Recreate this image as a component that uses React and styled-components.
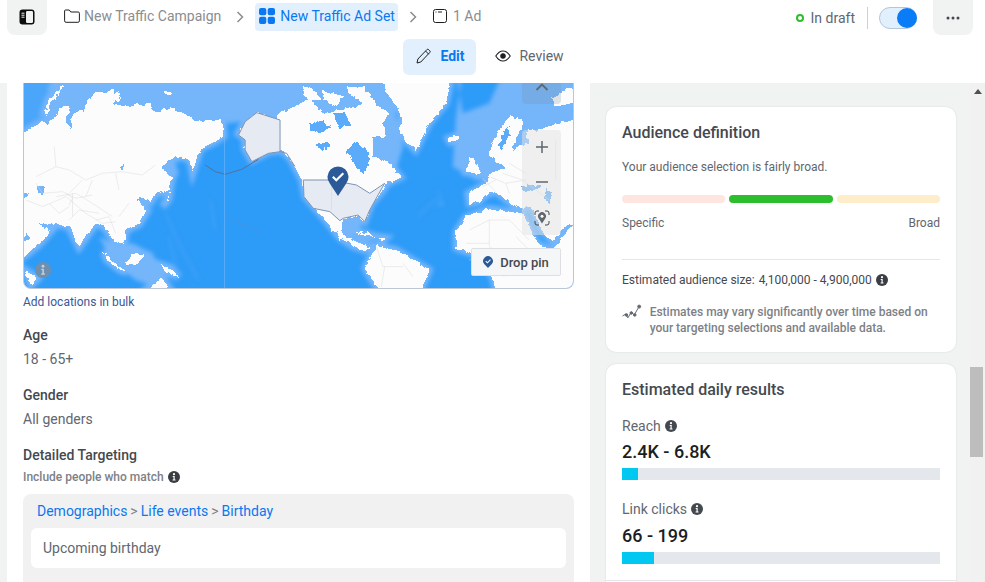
import React from 'react';
import styled, { createGlobalStyle } from 'styled-components';

const GlobalStyle = createGlobalStyle`
  html, body {
    margin: 0;
    padding: 0;
    height: 100%;
    overflow: hidden;
  }
  body {
    font-family: Roboto, "Liberation Sans", sans-serif;
    color: #444950;
  }
`;

// map outlines, traced at 3x: west half and east half of the picture
const WEST_LAND = [
  'M-30 160L25 155L80 125L95 132L120 105L130 85L160 78L150 125L170 150L165 110L190 90L200 100L210 68L240 40L290 30L320 58L288 68L340 78L405 72L412 98L470 82L545 125L620 118L625 168L592 188L555 205L532 275L525 240L500 230L462 240L440 262L470 292L462 330L420 342L405 365L385 352L362 358L395 392L370 432L330 450L325 492L295 482L265 440L240 430L190 500L160 440L110 430L62 432L105 452L72 490L30 525L-30 560z',
  'M85 100L100 55L145 15L130 40L105 70L95 105z',
  'M445 30l25 5l-5 12l-20 -5z',
  'M290 42l20 -8l-5 18z',
  'M330 550l30 -30l30 5l-25 30z',
  'M435 555l30 10l25 25l-40 -15z',
  'M380 640l60 -47l30 47z',
  'M265 515l40 40l30 20l-20 -5l-40 -30z',
  'M440 380l18 -20l6 -30l-8 32z',
  'M25 570l40 25l-20 20z',
  'M690 125l35 -27l70 22h80v170l-35 -35l-25 -40l-20 -5l-35 5l-50 25l-20 -35v-30l-20 -15z',
];

const EAST_LAND = [
  'M-40 105L60 55L100 100L150 88L200 80L240 60L302 100L280 130L292 172L250 170L250 232L292 240L335 292L292 312L280 332L245 372L225 425L205 405L160 415L155 450L175 475L215 490L240 500L225 512L190 500L150 475L110 425L75 385L45 350L35 300L0 235L-40 200z',
  'M40 20l30 5l20 28l-30 12l-20 -20z',
  'M100 30l60 20l-20 30l-40 -20z',
  'M170 20h50l40 50l-30 10l-50 -40z',
  'M40 160l20 -5l10 20l-25 5z',
  'M70 200l30 -15l10 15l-30 10z',
  'M275 0h210l-15 70l-50 60l-42 82l-25 -25l-22 -40l5 -45l-40 -60z',
  'M475 175l35 -12l-3 18l-26 6z',
  'M528 278l20 -48l28 50l-25 2z',
  'M790 55l50 -30l30 -5v50l-50 5l-20 5z',
  'M880 115L800 130L745 150L720 150L708 165L722 192L690 195L668 218L680 175L700 150L700 118L660 110L625 160L598 222L615 240L645 262L600 285L590 310L545 335L535 340L540 372L570 365L590 345L620 335L650 360L690 385L725 380L760 455L790 485L830 440L880 425z',
  'M500 455L530 410L600 385L700 400L745 490L790 510L860 425H880V640H620L610 590L560 525L500 505z',
  'M225 565L260 495L320 510L420 570L392 640H270z',
  'M190 452l50 10l15 12l-45 -10z',
  'M268 470l22 3l-10 8z',
];

const EAST_WATER = [
  'M165 215L190 190L228 200L240 240L222 285L195 250z',
  'M75 195l28 -10l20 10l-25 14z',
  'M60 130l40 -8l20 20l-30 18l-28 -8z',
  'M130 100l30 -5l25 40l-35 10z',
  'M695 318l60 -6l-20 22h-30z',
  'M772 325l14 15l-5 30l-14 -15z',
  'M640 165l22 -30l-4 30l-20 45l-12 -10z',
];

function InfoIcon({ color = '#3a3d42', glyph = '#fff', size = 12 }) {
  return (
    <svg width={size} height={size} viewBox="0 0 12 12">
      <circle cx="6" cy="6" r="6" fill={color} />
      <circle cx="6" cy="3.2" r="1.1" fill={glyph} />
      <path d="M4.7 5h2v3.6h.8v1H4.6v-1h.9V6h-.8z" fill={glyph} />
    </svg>
  );
}

function Chevron() {
  return (
    <svg width="8" height="12" viewBox="0 0 8 12" fill="none" stroke="#8a8d91" strokeWidth="1.5">
      <path d="M1.500 1l5 5-5 5" />
    </svg>
  );
}

function WorldMap() {
  return (
    <MapSvg viewBox="0 0 551 205" preserveAspectRatio="none">
      <defs>
        <filter id="shelf" filterUnits="userSpaceOnUse" x="-20" y="-20" width="591" height="245">
          <feGaussianBlur stdDeviation="2" />
        </filter>
        <filter id="coast" filterUnits="userSpaceOnUse" x="-20" y="-20" width="591" height="245">
          <feTurbulence type="fractalNoise" baseFrequency="0.16" numOctaves="3" seed="4" />
          <feDisplacementMap in="SourceGraphic" scale="6" xChannelSelector="R" yChannelSelector="G" />
        </filter>
      </defs>
      <rect width="551" height="205" fill="#2d9bf8" />

      {/* arctic water and continental shelf */}
      <g filter="url(#shelf)">
        <g transform="translate(-8,-3) scale(0.3333)">
          <path d="M100 -20H900V95L640 130L400 90L150 110L90 120z" fill="#74b6fb" />
          <path d="M-30 -20H110L70 130L-30 150z" fill="#4ba6f9" />
          {WEST_LAND.map((d) => <path key={d} d={d} fill="#74b6fb" stroke="#74b6fb" strokeWidth="24" />)}
          <path d="M440 250l30 -30l20 60l-30 50zM250 470l60 30l40 -10l60 30l40 70l-30 30l-60 -20l-50 -40l-40 -50z" fill="#74b6fb" />
          <path d="M450 400l40 90l60 110M585 360l15 90M460 470l30 130" fill="none" stroke="#4ba6f9" strokeWidth="4" />
        </g>
        <g transform="translate(267,-3) scale(0.3333)">
          <path d="M-30 -20H300L320 110L340 200L310 300L200 300L100 250z" fill="#74b6fb" />
          <path d="M480 -20H520L500 110L490 260L560 300L860 300V-20H640L600 70L520 100L500 -20z" fill="#74b6fb" />
          {EAST_LAND.map((d) => <path key={d} d={d} fill="#74b6fb" stroke="#74b6fb" strokeWidth="20" />)}
          <path d="M160 420l60 -10l-10 50l-40 20zM190 470l40 10l60 30l-30 10l-60 -20z" fill="#74b6fb" />
          <path d="M385 410l50 -50l25 15l-15 -45M440 380l25 -10" fill="none" stroke="#4ba6f9" strokeWidth="4" />
        </g>
      </g>

      {/* land with a rough coast */}
      <g filter="url(#coast)" shapeRendering="crispEdges">
        <g transform="translate(-8,-3) scale(0.3333)">
          {WEST_LAND.map((d) => <path key={d} d={d} fill="#fcfcfc" />)}
          <path d="M62 315l25 5l-5 25l-20 -5zM310 260l18 -10l-12 25zM-30 335l66 5l-12 12zM28 455l15 20l-18 5z" fill="#74b6fb" />
        </g>
        <g transform="translate(267,-3) scale(0.3333)">
          {EAST_LAND.map((d) => <path key={d} d={d} fill="#fcfcfc" />)}
          {EAST_WATER.map((d) => <path key={d} d={d} fill="#5aabf9" />)}
        </g>
      </g>

      {/* borders and the selected country */}
      <g transform="translate(-8,-3) scale(0.3333)" fill="none">
        <path d="M60 290l60 -30l40 10l50 30l50 -20l60 -5l60 10l40 -30M120 350l60 -10l50 30l60 40M30 360l50 20l70 -30l60 50l50 30l40 -5M170 340v70M230 300l-20 50M300 280l10 50M115 200l5 60M60 310l20 30l60 -5l40 20l50 -10M150 340l20 15l-10 20M160 420l30 -30l60 10M100 370l30 30l30 -20M240 420l40 -10l20 50M340 370l-30 40M200 300l-40 40" stroke="#d9dadc" strokeWidth="1.500" />
        <path d="M690 125l35 -27l70 22v95l-35 5l-50 25l-20 -35v-30l-20 -15z" fill="#e6ebf3" stroke="#7d93b5" strokeWidth="3" />
        <path d="M795 215l20 5l25 40" stroke="#7d93b5" strokeWidth="3" />
        <path d="M570 255l30 20l30 8l50 -15l50 -30" stroke="#566f9a" strokeWidth="3" />
        <path d="M628 125v500" stroke="#74b6fb" strokeWidth="2" />
        <path d="M630 410l100 45" stroke="#5b8fd0" strokeWidth="3" strokeDasharray="5 6" />
      </g>
      <g transform="translate(267,-3) scale(0.3333)" fill="none">
        <path d="M540 450l60 -30l60 0l60 60M600 420v80l50 30v60M530 490h70M620 335l-40 -40M640 280l60 20M260 500l20 60l60 0M285 560l-10 60M800 180v120M700 300l80 60M600 290l50 20l60 -10M660 250l50 30M540 540l60 -10M680 470l60 60M640 590l60 -50M580 320l40 -20M650 310l10 30M720 530l50 30M340 550l30 40" stroke="#d9dadc" strokeWidth="1.500" />
        <path d="M40 300L120 300L200 315L240 340L285 310L265 345L240 390L225 425L205 405L160 415L150 422L120 395L70 385L42 350z" fill="#e6ebf3" stroke="#7d93b5" strokeWidth="3" />
        <path d="M125 300v90" stroke="#d3d8e0" strokeWidth="2" />
      </g>
    </MapSvg>
  );
}

function App() {
  return (
    <>
      <GlobalStyle />
      <Page>
        <Header>
          <TopRow>
            <Crumbs>
              <SquareButton>
                <svg width="16" height="16" viewBox="0 0 16 16">
                  <rect x=".5" y=".5" width="15" height="15" rx="3" fill="#0d0d0d" />
                  <rect x="7" y="2" width="7" height="12" rx="1.200" fill="#f1f2f2" />
                  <path d="M2.500 4.200h3M2.500 6.200h3M2.500 8.200h3" stroke="#f1f2f2" strokeWidth="1" />
                </svg>
              </SquareButton>
              <Crumb>
                <svg width="16" height="14" viewBox="0 0 16 14" fill="none" stroke="#1c1e21" strokeWidth="1">
                  <path d="M.6 3V2a1 1 0 0 1 1-1h3.600l1.600 2h7.400a1.200 1.200 0 0 1 1.200 1.200v7.600a1.500 1.500 0 0 1-1.500 1.500H2.100a1.500 1.500 0 0 1-1.500-1.500z" />
                </svg>
                New Traffic Campaign
              </Crumb>
              <ChevronBox $left="15px" $right="11px"><Chevron /></ChevronBox>
              <Crumb $active>
                <svg width="16" height="16" viewBox="0 0 16 16" fill="#0a78f0">
                  <rect width="7.300" height="7.300" rx="2" />
                  <rect x="8.700" width="7.300" height="7.300" rx="2" />
                  <rect y="8.700" width="7.300" height="7.300" rx="2" />
                  <rect x="8.700" y="8.700" width="7.300" height="7.300" rx="2" />
                </svg>
                New Traffic Ad Set
              </Crumb>
              <ChevronBox $left="11px" $right="16px"><Chevron /></ChevronBox>
              <Crumb $wide>
                <svg width="14" height="14" viewBox="0 0 14 14" fill="none" stroke="#1c1e21" strokeWidth="1">
                  <rect x=".5" y=".5" width="13" height="13" rx="2" />
                  <path d="M2.500 3h1M5 3h4" />
                </svg>
                1 Ad
              </Crumb>
            </Crumbs>
            <Status>
              <Dot />
              <StatusLabel>In draft</StatusLabel>
              <Separator />
              <Toggle><Knob /></Toggle>
              <SquareButton $more>
                <svg width="14" height="4" viewBox="0 0 14 4" fill="#444950">
                  <circle cx="2" cy="2" r="1.500" />
                  <circle cx="7" cy="2" r="1.500" />
                  <circle cx="12" cy="2" r="1.500" />
                </svg>
              </SquareButton>
            </Status>
          </TopRow>
          <Tabs>
            <Tab $active>
              <svg width="15" height="16" viewBox="0 0 15 16" fill="none" stroke="#1c1e21" strokeWidth="1">
                <path d="M1 15l.9-4L10.800 1.700a1.300 1.300 0 0 1 1.900 0l1 1a1.300 1.300 0 0 1 0 1.900L4.800 14z" />
                <path d="M9.500 3l3.200 3.200" />
              </svg>
              Edit
            </Tab>
            <Tab>
              <svg width="16" height="12" viewBox="0 0 16 12" fill="none" stroke="#1c1e21" strokeWidth="1.100">
                <path d="M.8 6C3 2.500 5.300 1 8 1s5 1.500 7.200 5C13 9.500 10.700 11 8 11S3 9.500.8 6z" />
                <circle cx="8" cy="6" r="2.200" fill="#1c1e21" />
              </svg>
              Review
            </Tab>
          </Tabs>
        </Header>

        <Content>
          <LeftPanel>
            <MapBox>
              <WorldMap />
              <MapControls>
                <MapTopControl>
                  <svg width="14" height="8" viewBox="0 0 14 8" fill="none" stroke="#606770" strokeWidth="1.800">
                    <path d="M1.500 7L7 1.500 12.500 7" />
                  </svg>
                </MapTopControl>
                <MapZoomControl>
                  <svg width="12" height="12" viewBox="0 0 12 12" stroke="#606770" strokeWidth="1.500">
                    <path d="M6 0v12M0 6h12" />
                  </svg>
                  <svg width="12" height="2" viewBox="0 0 12 2" stroke="#606770" strokeWidth="1.500">
                    <path d="M0 1h12" />
                  </svg>
                  <svg width="16" height="16" viewBox="0 0 16 16" fill="none">
                    <path d="M1 5V3a2 2 0 0 1 2-2h2M11 1h2a2 2 0 0 1 2 2v2M15 11v2a2 2 0 0 1-2 2h-2M5 15H3a2 2 0 0 1-2-2v-2" stroke="#444950" strokeWidth="1" />
                    <path d="M8 13.500L4.600 8.300a4 4 0 1 1 6.800 0z" fill="#606770" />
                    <circle cx="8" cy="6.200" r="1.500" fill="#fff" />
                  </svg>
                </MapZoomControl>
              </MapControls>
              <MapPin>
                <svg width="22" height="30" viewBox="0 0 22 30">
                  <path d="M11 30L2.800 17.500A10.500 10.500 0 1 1 19.200 17.500z" fill="#2c5a98" />
                  <path d="M5.800 10.800l3.500 3.400 7-7" fill="none" stroke="#fff" strokeWidth="2.200" />
                </svg>
              </MapPin>
              <MapInfo><InfoIcon color="#6f8fae" glyph="#c3d0dc" size={16} /></MapInfo>
              <DropPin>
                <svg width="10" height="12" viewBox="0 0 11 13">
                  <path d="M5.500 13L1.300 8.800A5.300 5.300 0 1 1 9.700 8.800z" fill="#2c5a98" />
                  <path d="M3 5.500l1.900 1.900L8.200 4" fill="none" stroke="#fff" strokeWidth="1.200" />
                </svg>
                Drop pin
              </DropPin>
            </MapBox>
            <BulkLink>Add locations in bulk</BulkLink>
            <FieldLabel $first>Age</FieldLabel>
            <FieldValue>18 - 65+</FieldValue>
            <FieldLabel>Gender</FieldLabel>
            <FieldValue>All genders</FieldValue>
            <FieldLabel>Detailed Targeting</FieldLabel>
            <IncludeRow>Include people who match <InfoIcon /></IncludeRow>
            <TargetBox>
              <TargetPath>
                <TargetLink>Demographics</TargetLink>
                <TargetSep>&gt;</TargetSep>
                <TargetLink>Life events</TargetLink>
                <TargetSep>&gt;</TargetSep>
                <TargetLink>Birthday</TargetLink>
              </TargetPath>
              <TargetItem>Upcoming birthday</TargetItem>
            </TargetBox>
          </LeftPanel>

          <RightPanel>
            <AudienceCard>
              <CardTitle>Audience definition</CardTitle>
              <SmallText>Your audience selection is fairly broad.</SmallText>
              <Meter>
                <MeterPart $color="#ffe5e0" />
                <MeterPart $color="#2dbe2d" />
                <MeterPart $color="#fdeec9" />
              </Meter>
              <MeterLabels>
                <span>Specific</span>
                <span>Broad</span>
              </MeterLabels>
              <CardRule />
              <SizeRow>
                <span>Estimated audience size:</span>
                <span>4,100,000 - 4,900,000</span>
                <InfoIcon />
              </SizeRow>
              <NoteRow>
                <svg width="20" height="16" viewBox="0 0 20 16" fill="none" stroke="#606770" strokeWidth="1">
                  <path d="M.5 12l3.500-2 2 4 3.500-6 3 3 4-7" />
                  <circle cx="4.500" cy="11" r="1.300" fill="#606770" />
                  <circle cx="9.500" cy="9" r="1.300" fill="#606770" />
                  <circle cx="13" cy="11" r="1.300" fill="#606770" />
                  <circle cx="17.500" cy="2.500" r="1.500" fill="#606770" />
                </svg>
                <NoteText>Estimates may vary significantly over time based on your targeting selections and available data.</NoteText>
              </NoteRow>
            </AudienceCard>

            <ResultsCard>
              <CardTitle>Estimated daily results</CardTitle>
              <ResultLabel>Reach <InfoIcon color="#444950" /></ResultLabel>
              <ResultValue>2.4K - 6.8K</ResultValue>
              <Bar><BarFill style={{ width: '5%' }} /></Bar>
              <ResultLabel $second>Link clicks <InfoIcon color="#444950" /></ResultLabel>
              <ResultValue $second>66 - 199</ResultValue>
              <Bar><BarFill style={{ width: '10%' }} /></Bar>
              <ResultsRule />
            </ResultsCard>
          </RightPanel>

          <Scrollbar>
            <ScrollArrow />
            <ScrollThumb />
          </Scrollbar>
        </Content>
      </Page>
    </>
  );
}

export default App;

const Page = styled.div`
  width: 985px;
  height: 582px;
  overflow: hidden;
  display: flex;
  flex-direction: column;
  background: #f1f2f2;
`;

const Header = styled.header`
  height: 83px;
  flex: none;
  background: #fff;
  padding: 0 12px 0 7px;
  box-sizing: border-box;
`;

const TopRow = styled.div`
  display: flex;
  justify-content: space-between;
  align-items: flex-start;
  height: 35px;
`;

const Crumbs = styled.div`
  display: flex;
  align-items: center;
  height: 34px;
`;

const SquareButton = styled.div`
  width: 40px;
  height: 35px;
  flex: none;
  margin-right: ${(p) => (p.$more ? '0' : '17px')};
  margin-left: ${(p) => (p.$more ? '16px' : '0')};
  display: flex;
  align-items: center;
  justify-content: center;
  background: #f1f2f2;
  border-radius: 0 0 8px 8px;
`;

const Crumb = styled.div`
  display: flex;
  align-items: center;
  gap: ${(p) => (p.$active ? '5px' : p.$wide ? '6px' : '4px')};
  height: 28px;
  padding: ${(p) => (p.$active ? '0 3px 2px 4px' : '0 0 2px')};
  box-sizing: border-box;
  border-radius: 4px;
  font-size: 14px;
  color: ${(p) => (p.$active ? '#0a78f0' : '#8a8d91')};
  background: ${(p) => (p.$active ? '#e2f0fe' : 'transparent')};
  white-space: nowrap;

  svg {
    flex: none;
  }
`;

const ChevronBox = styled.div`
  display: flex;
  align-items: center;
  margin: 0 ${(p) => p.$right} 0 ${(p) => p.$left};
`;

const Status = styled.div`
  display: flex;
  align-items: center;
  height: 35px;
`;

const Dot = styled.div`
  width: 8px;
  height: 8px;
  box-sizing: border-box;
  border: 2px solid #2dbe2d;
  border-radius: 50%;
  margin-right: 7px;
`;

const StatusLabel = styled.span`
  font-size: 14px;
  color: #606770;
`;

const Separator = styled.div`
  width: 1px;
  height: 22px;
  background: #ccd0d5;
  margin: 0 11px 0 12px;
`;

const Toggle = styled.div`
  width: 38px;
  height: 22px;
  box-sizing: border-box;
  display: flex;
  justify-content: flex-end;
  align-items: center;
  background: #e2f0fe;
  border: 1px solid #b5c6dc;
  border-radius: 11px;
`;

const Knob = styled.div`
  width: 20px;
  height: 20px;
  margin-right: -1px;
  border-radius: 50%;
  background: #0a7cf5;
`;

const Tabs = styled.div`
  display: flex;
  justify-content: center;
  margin-top: 4px;
  margin-left: -1px;
  gap: 7px;
`;

const Tab = styled.div`
  display: flex;
  align-items: center;
  gap: ${(p) => (p.$active ? '9px' : '8px')};
  height: 36px;
  padding: 0 12px 2px ${(p) => (p.$active ? '13px' : '12px')};
  box-sizing: border-box;
  border-radius: 6px;
  font-size: 14px;
  font-weight: ${(p) => (p.$active ? 700 : 400)};
  color: ${(p) => (p.$active ? '#0a78f0' : '#606770')};
  background: ${(p) => (p.$active ? '#e2f0fe' : 'transparent')};
`;

const Content = styled.div`
  flex: 1;
  min-height: 0;
  display: flex;
  padding-left: 7px;
`;

const LeftPanel = styled.div`
  width: 583px;
  flex: none;
  box-sizing: border-box;
  padding: 0 16px;
  background: #fff;
  display: flex;
  flex-direction: column;
`;

const MapBox = styled.div`
  position: relative;
  height: 205px;
  width: 549px;
  flex: none;
  overflow: hidden;
  border-radius: 0 0 8px 8px;
  border: 1px solid #bcc6d6;
  border-top: none;
`;

const MapSvg = styled.svg`
  display: block;
  width: 100%;
  height: 100%;
`;

const MapControls = styled.div`
  position: absolute;
  top: 0;
  right: 12px;
  width: 39px;
  display: flex;
  flex-direction: column;
  gap: 26px;
`;

const MapTopControl = styled.div`
  height: 21px;
  display: flex;
  justify-content: center;
  align-items: flex-start;
  background: rgba(120, 135, 155, 0.22);
  border-radius: 0 0 4px 4px;
`;

const MapZoomControl = styled.div`
  height: 105px;
  padding: 11px 0 9px;
  box-sizing: border-box;
  display: flex;
  flex-direction: column;
  align-items: center;
  justify-content: space-between;
  background: rgba(225, 225, 225, 0.5);
  border-radius: 4px;
`;

const MapPin = styled.div`
  position: absolute;
  left: 303px;
  top: 83px;
  line-height: 0;
`;

const MapInfo = styled.div`
  position: absolute;
  left: 11px;
  bottom: 10px;
  line-height: 0;
`;

const DropPin = styled.div`
  position: absolute;
  right: 12px;
  bottom: 12px;
  width: 90px;
  height: 28px;
  box-sizing: border-box;
  display: flex;
  align-items: center;
  justify-content: center;
  gap: 7px;
  font-size: 13px;
  font-weight: 500;
  color: #444950;
  background: #f5f6f7;
  border: 1px solid #dddfe2;
  border-radius: 2px;
`;

const BulkLink = styled.div`
  margin-top: 6px;
  height: 15px;
  line-height: 15px;
  font-size: 12px;
  color: #385898;
`;

const FieldLabel = styled.div`
  margin-top: ${(p) => (p.$first ? '15px' : '16px')};
  height: 20px;
  line-height: 20px;
  font-size: 14px;
  font-weight: 500;
  color: #444950;
`;

const FieldValue = styled.div`
  margin-top: 4px;
  height: 20px;
  line-height: 20px;
  font-size: 14px;
  color: #606770;
`;

const IncludeRow = styled.div`
  margin-top: 5px;
  display: flex;
  align-items: center;
  gap: 4px;
  height: 15px;
  font-size: 12px;
  font-weight: 500;
  color: #7d8186;
`;

const TargetBox = styled.div`
  margin-top: 10px;
  padding: 8px 8px 20px;
  background: #f1f1f1;
  border-radius: 8px;
`;

const TargetPath = styled.div`
  display: flex;
  align-items: center;
  gap: 3px;
  height: 18px;
  padding-left: 6px;
  font-size: 14px;
`;

const TargetLink = styled.span`
  color: #0a78f0;
`;

const TargetSep = styled.span`
  color: #7d8186;
`;

const TargetItem = styled.div`
  margin-top: 8px;
  height: 40px;
  padding-left: 12px;
  display: flex;
  align-items: center;
  background: #fff;
  border-radius: 6px;
  font-size: 14px;
  color: #606770;
`;

const RightPanel = styled.div`
  width: 350px;
  flex: none;
  margin-left: 16px;
  padding-top: 24px;
  display: flex;
  flex-direction: column;
  gap: 12px;
`;

const Card = styled.section`
  background: #fff;
  border-radius: 10px;
  box-shadow: 0 0 2px rgba(0, 0, 0, 0.12);
  padding: 16px;
  box-sizing: border-box;
  flex: none;
`;

const AudienceCard = styled(Card)`
  height: 245px;
`;

const ResultsCard = styled(Card)`
  height: 230px;
`;

const CardTitle = styled.h2`
  margin: 0;
  height: 20px;
  line-height: 20px;
  font-size: 16px;
  font-weight: 500;
  color: #444950;
`;

const SmallText = styled.div`
  margin-top: 16px;
  height: 16px;
  line-height: 16px;
  font-size: 12px;
  color: #606770;
`;

const Meter = styled.div`
  margin-top: 20px;
  display: flex;
  gap: 4px;
`;

const MeterPart = styled.div`
  flex: 1;
  height: 8px;
  border-radius: 4px;
  background: ${(p) => p.$color};
`;

const MeterLabels = styled.div`
  margin-top: 12px;
  display: flex;
  justify-content: space-between;
  height: 16px;
  line-height: 16px;
  font-size: 12px;
  color: #606770;
`;

const CardRule = styled.div`
  margin-top: 28px;
  height: 1px;
  background: #e4e6e9;
`;

const SizeRow = styled.div`
  margin-top: 12px;
  display: flex;
  align-items: center;
  gap: 4px;
  height: 16px;
  font-size: 12px;
  color: #444950;
`;

const NoteRow = styled.div`
  margin-top: 16px;
  display: flex;
  align-items: flex-start;
  gap: 8px;
`;

const NoteText = styled.div`
  width: 296px;
  line-height: 16px;
  font-size: 12px;
  font-weight: 500;
  color: #7d8186;
`;

const ResultLabel = styled.div`
  margin-top: ${(p) => (p.$second ? '19px' : '16px')};
  display: flex;
  align-items: center;
  gap: 4px;
  height: 20px;
  font-size: 14px;
  color: #606770;
`;

const ResultValue = styled.div`
  margin-top: ${(p) => (p.$second ? '7px' : '6px')};
  height: 20px;
  line-height: 20px;
  font-size: 18px;
  font-weight: 500;
  color: #1c1e21;
`;

const Bar = styled.div`
  margin-top: 6px;
  height: 12px;
  background: #e4e8ec;
`;

const BarFill = styled.div`
  height: 100%;
  background: #00c8f0;
`;

const ResultsRule = styled.div`
  margin: 16px -16px 0;
  height: 1px;
  background: #e4e6e9;
`;

const Scrollbar = styled.div`
  width: 15px;
  flex: none;
  margin-left: 14px;
  display: flex;
  flex-direction: column;
  align-items: center;
  background: #f1f1f1;
`;

const ScrollArrow = styled.div`
  margin-top: 6px;
  width: 0;
  height: 0;
  border-left: 4px solid transparent;
  border-right: 4px solid transparent;
  border-bottom: 5px solid #505050;
`;

const ScrollThumb = styled.div`
  margin-top: 273px;
  width: 13px;
  height: 90px;
  margin-left: -2px;
  background: #bdbdbd;
`;
